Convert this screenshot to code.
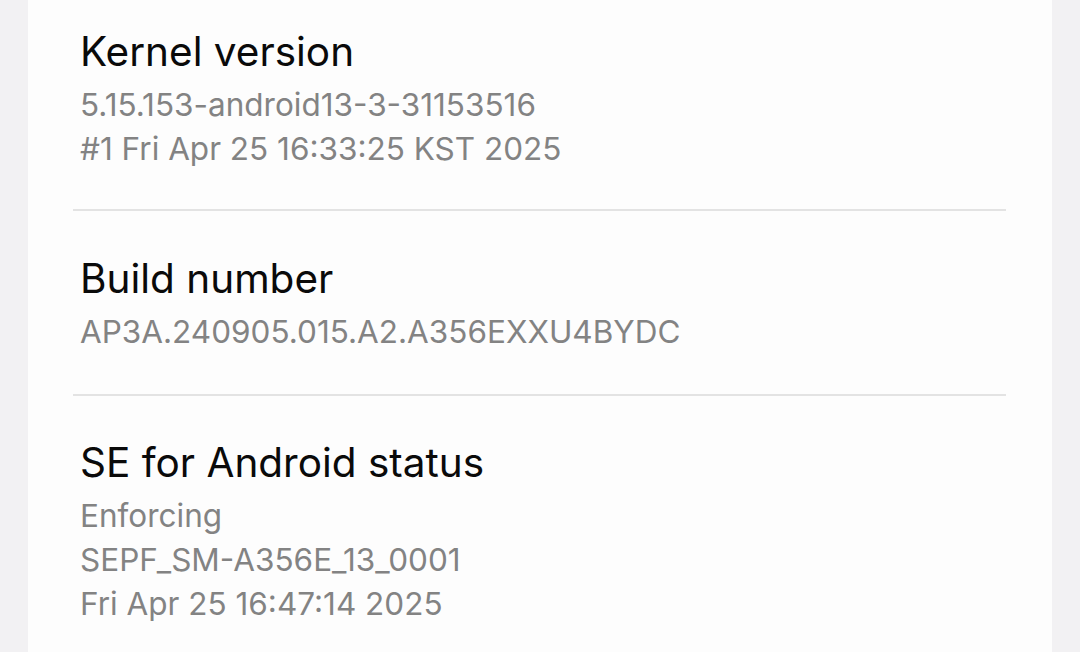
import React from "react";

export default function App() {
  return (
    <div
      className="w-[1080px] h-[652px] bg-[#f2f1f3] px-[28px] overflow-hidden"
      style={{ fontFamily: "Inter, 'Noto Sans', sans-serif" }}
    >
      <div className="h-full bg-[#fdfdfd]">
        <div className="pt-[26px] pb-[38px] pl-[52px] pr-[52px]">
          <div className="text-[40.5px] leading-[52px] text-[#0a0a0a]">Kernel version</div>
          <div className="mt-[5px] text-[31.5px] leading-[44px] text-[#838383]">
            <div>5.15.153-android13-3-31153516</div>
            <div>#1 Fri Apr 25 16:33:25 KST 2025</div>
          </div>
        </div>
        <div className="ml-[45px] mr-[46px] h-[2px] bg-[#e3e3e3]" />
        <div className="pt-[42px] pb-[40px] pl-[52px] pr-[52px]">
          <div className="text-[40.5px] leading-[52px] text-[#0a0a0a]">Build number</div>
          <div className="mt-[5px] text-[31.5px] leading-[44px] text-[#838383]">
            <div>AP3A.240905.015.A2.A356EXXU4BYDC</div>
          </div>
        </div>
        <div className="ml-[45px] mr-[46px] h-[2px] bg-[#e3e3e3]" />
        <div className="pt-[41px] pl-[52px] pr-[52px]">
          <div className="text-[40.5px] leading-[52px] text-[#0a0a0a]">SE for Android status</div>
          <div className="mt-[5px] text-[31.5px] leading-[44px] text-[#838383]">
            <div>Enforcing</div>
            <div>SEPF_SM-A356E_13_0001</div>
            <div>Fri Apr 25 16:47:14 2025</div>
          </div>
        </div>
      </div>
    </div>
  );
}
